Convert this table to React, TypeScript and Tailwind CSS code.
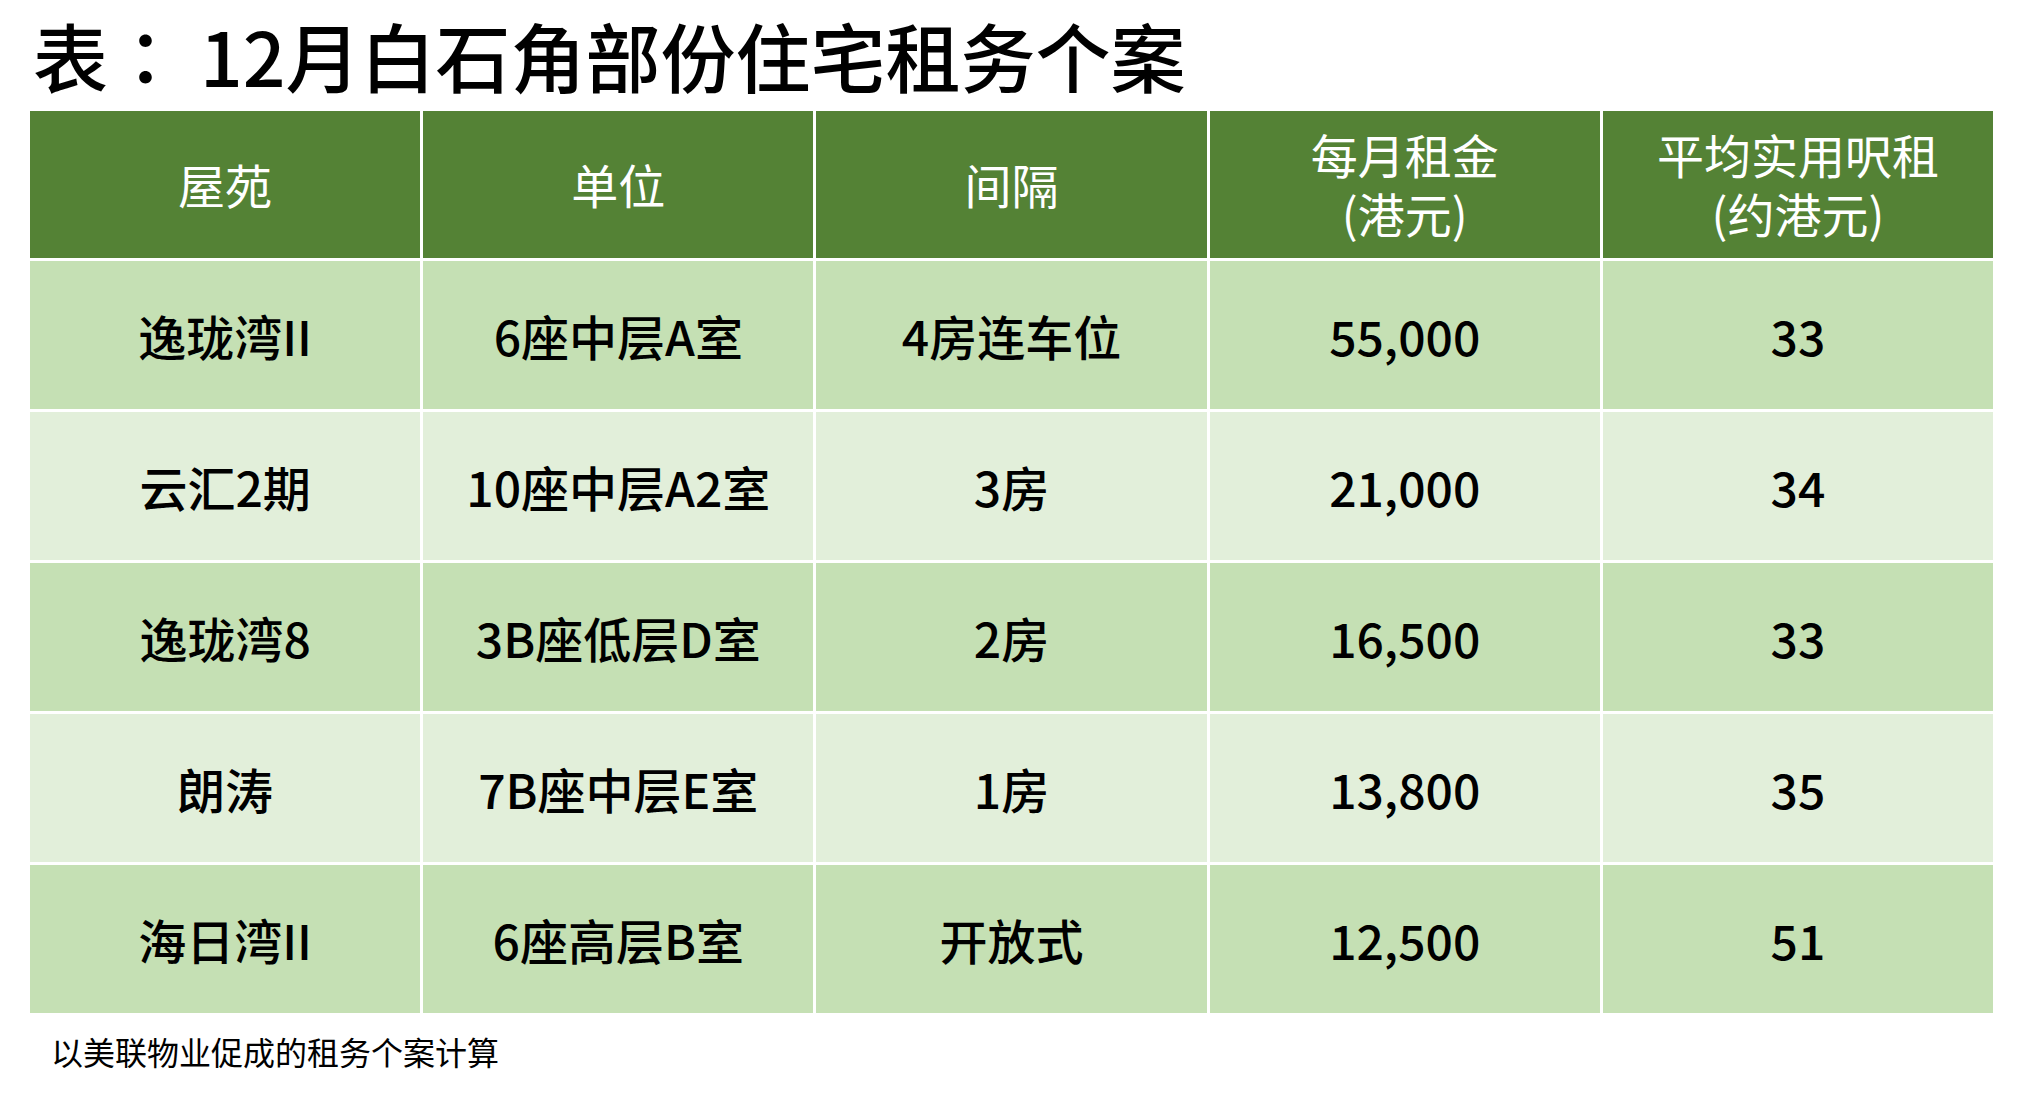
import React from "react";

const rows: string[][] = [
  ["逸珑湾II", "6座中层A室", "4房连车位", "55,000", "33"],
  ["云汇2期", "10座中层A2室", "3房", "21,000", "34"],
  ["逸珑湾8", "3B座低层D室", "2房", "16,500", "33"],
  ["朗涛", "7B座中层E室", "1房", "13,800", "35"],
  ["海日湾II", "6座高层B室", "开放式", "12,500", "51"],
];

export default function App() {
  return (
    <div
      className="w-[2026px] h-[1093px] bg-white text-black overflow-hidden"
      style={{ fontFamily: '"Noto Sans CJK SC", "Noto Sans", sans-serif' }}
    >
      <div className="pl-[33px] pt-[10px] h-[111px] text-[75px] leading-[1.2] font-medium whitespace-nowrap">
        表<span className="font-['Noto_Sans_CJK_TC',sans-serif]">：</span> 12月白石角部份住宅租务个案
      </div>
      <div className="ml-[30px] w-[1963px] grid grid-cols-5 gap-[3px] bg-white">
        {[
          ["屋苑"],
          ["单位"],
          ["间隔"],
          ["每月租金", "(港元)"],
          ["平均实用呎租", "(约港元)"],
        ].map((h, i) => (
          <div
            key={i}
            className="h-[147px] bg-[#548235] text-white flex flex-col items-center justify-center text-[47px] leading-[59px] pb-[3px]"
          >
            {h.map((l, j) => (
              <span key={j}>{l}</span>
            ))}
          </div>
        ))}
        {rows.map((r, ri) =>
          r.map((c, ci) => (
            <div
              key={`${ri}-${ci}`}
              className={`h-[148px] flex items-center justify-center text-[48px] font-medium ${
                ri % 2 === 0 ? "bg-[#c5e0b4]" : "bg-[#e2efda]"
              }`}
            >
              {c}
            </div>
          ))
        )}
      </div>
      <div className="pl-[51px] pt-[19px] text-[32px] leading-[1.2]">
        以美联物业促成的租务个案计算
      </div>
    </div>
  );
}
